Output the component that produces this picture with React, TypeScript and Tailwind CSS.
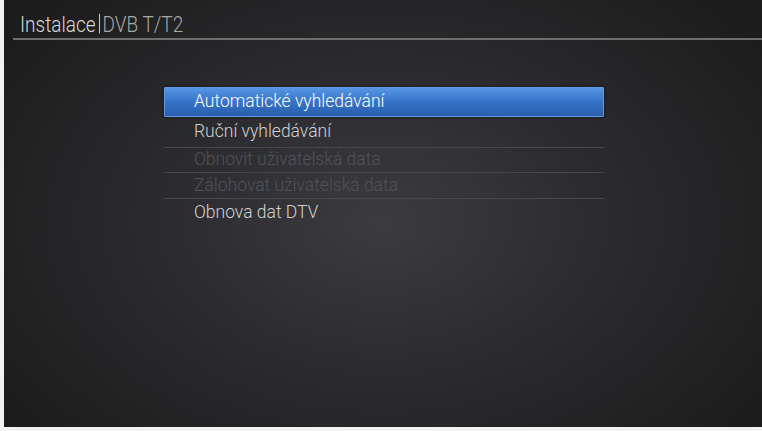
const items = [
  { label: 'Automatické vyhledávání', state: 'active', h: 'h-[30px]' },
  { label: 'Ruční vyhledávání', state: 'normal', h: 'h-[31px]' },
  { label: 'Obnovit uživatelská data', state: 'disabled', h: 'h-[25px]' },
  { label: 'Zálohovat uživatelská data', state: 'disabled', h: 'h-[26px]' },
  { label: 'Obnova dat DTV', state: 'normal', h: 'h-[27px]' },
]

export default function App() {
  return (
    <div className="flex h-[431px] w-[762px] flex-col bg-[#f2f2f2] pb-[4px] pl-[4px] font-['Roboto',sans-serif]">
      <div className="flex flex-1 flex-col bg-[radial-gradient(ellipse_62%_75%_at_50%_52%,#3b3b40_0%,#2c2c30_45%,#1c1c1c_100%)]">
        <div className="flex h-[38px] origin-bottom scale-y-[1.15] items-end pl-[16px] pb-[2px]">
          <span className="text-[19px] font-light leading-none text-[#d8d8d8]">Instalace</span>
          <span className="mx-[3px] mb-[2px] h-[17px] w-px bg-[#c8c8c8]" />
          <span className="text-[19px] font-light leading-none text-[#a8a8a8]">DVB T/T2</span>
        </div>
        <div className="ml-[9px] h-[1.5px] bg-[#6e6e6e]" />

        <div className="ml-[160px] mt-[47px] w-[440px]">
          {items.map((it) =>
            it.state === 'active' ? (
              <div
                key={it.label}
                className={`${it.h} flex items-center rounded-[1px] border border-[#5f9be6] bg-gradient-to-b from-[#5596e3] via-[#3673c7] to-[#2a5eac] pl-[29px] text-[17.5px] font-light text-white shadow-[0_0_3px_rgba(0,0,0,0.6)]`}
              >
                {it.label}
              </div>
            ) : (
              <div
                key={it.label}
                className={`${it.h} flex items-center border-b border-[#48484b] pl-[30px] text-[17.5px] font-light ${
                  it.state === 'disabled' ? 'text-[#525256]' : 'text-[#d2d2d2]'
                } last:border-b-0`}
              >
                {it.label}
              </div>
            )
          )}
        </div>
      </div>
    </div>
  )
}
